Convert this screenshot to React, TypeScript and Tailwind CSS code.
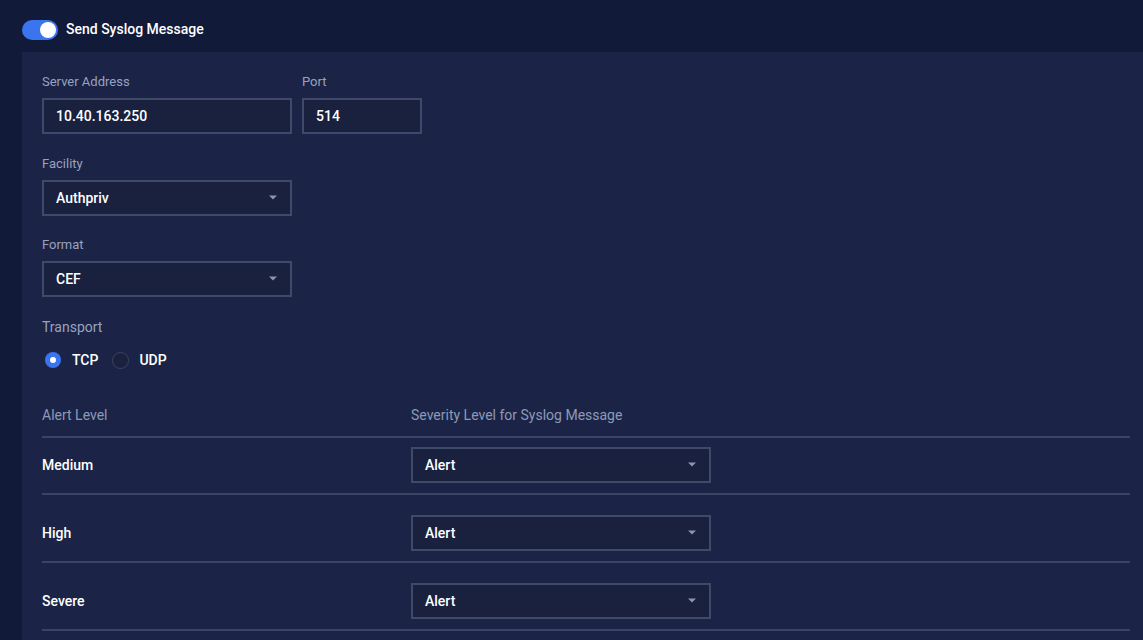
import React from 'react';

function Caret() {
  return (
    <svg className="w-[10px] h-[6px]" viewBox="0 0 10 6" fill="#8a94b3">
      <path d="M1 0.5h8L5 4.5z" />
    </svg>
  );
}

function SelectBox({ value, width }: { value: string; width: string }) {
  return (
    <div
      className={`${width} h-[36px] flex items-center justify-between pl-[12px] pr-[12px] border-2 border-[#3f496a] bg-[#19213f] text-white text-[14px] font-medium`}
    >
      <span>{value}</span>
      <Caret />
    </div>
  );
}

function Label({ children }: { children: React.ReactNode }) {
  return <div className="text-[13px] leading-[18px] text-[#98a2c0] mb-[7px]">{children}</div>;
}

export default function App() {
  const rows = ['Medium', 'High', 'Severe'];

  return (
    <div className="min-h-[640px] bg-[#111a38] font-['Roboto','Liberation_Sans',sans-serif] overflow-hidden">
      <div className="flex items-start gap-[8px] pl-[22px] pt-[19px] h-[52px]">
        <div className="mt-[1px] w-[36px] h-[20px] rounded-full bg-[#3a74ef] flex items-center justify-end pr-[2px]">
          <div className="w-[16px] h-[16px] rounded-full bg-white" />
        </div>
        <span className="text-white text-[14px] font-medium leading-[20px]">Send Syslog Message</span>
      </div>

      <div className="ml-[22px] bg-[#1b2446] pl-[20px] pt-[21px] pb-[40px] min-h-[588px]">
        <div className="flex gap-[10px]">
          <div>
            <Label>Server Address</Label>
            <div className="w-[250px] h-[36px] flex items-center pl-[12px] border-2 border-[#3f496a] bg-[#19213f] text-white text-[14px] font-medium">
              10.40.163.250
            </div>
          </div>
          <div>
            <Label>Port</Label>
            <div className="w-[120px] h-[36px] flex items-center pl-[12px] border-2 border-[#3f496a] bg-[#19213f] text-white text-[14px] font-medium">
              514
            </div>
          </div>
        </div>

        <div className="mt-[21px]">
          <Label>Facility</Label>
          <SelectBox value="Authpriv" width="w-[250px]" />
        </div>

        <div className="mt-[20px]">
          <Label>Format</Label>
          <SelectBox value="CEF" width="w-[250px]" />
        </div>

        <div className="mt-[21px]">
          <div className="text-[14px] leading-[18px] text-[#98a2c0]">Transport</div>
          <div className="flex items-center mt-[14px] h-[20px] pl-[3px]">
            <div className="w-[16px] h-[16px] rounded-full bg-[#3a74ef] flex items-center justify-center">
              <div className="w-[6px] h-[6px] rounded-full bg-white" />
            </div>
            <span className="ml-[11px] text-white text-[14px] font-medium">TCP</span>
            <div className="ml-[14px] w-[17px] h-[17px] rounded-full border border-[#3a4566] bg-[#19213f]" />
            <span className="ml-[10px] text-white text-[14px] font-medium">UDP</span>
          </div>
        </div>

        <div className="w-[1088px] mt-[36px]">
          <div className="flex text-[14px] leading-[18px] text-[#8e99b8] pb-[12px] border-b-2 border-[#3a4566]">
            <div className="w-[369px]">Alert Level</div>
            <div>Severity Level for Syslog Message</div>
          </div>
          {rows.map((row, i) => (
            <div
              key={row}
              className={`flex items-center border-b-2 border-[#3a4566] pb-[10px] ${i === 0 ? 'pt-[9px]' : 'pt-[20px]'}`}
            >
              <div className="w-[369px] text-white text-[14px] font-medium">{row}</div>
              <SelectBox value="Alert" width="w-[300px]" />
            </div>
          ))}
        </div>
      </div>
    </div>
  );
}
